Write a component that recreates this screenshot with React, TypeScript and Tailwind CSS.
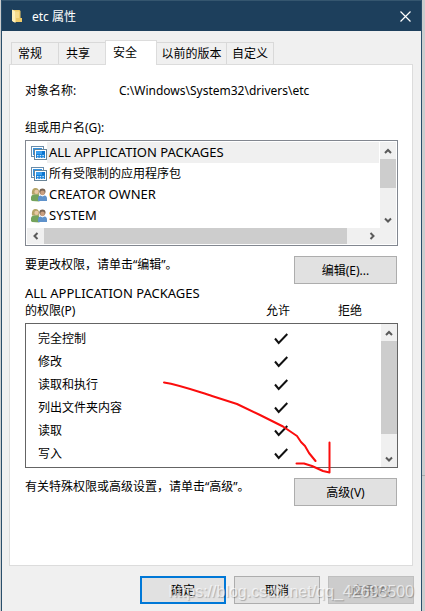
import { useState } from 'react';
import type { ReactNode } from 'react';

const principals = [
    { name: 'ALL APPLICATION PACKAGES', kind: 'app' },
    { name: '所有受限制的应用程序包', kind: 'app' },
    { name: 'CREATOR OWNER', kind: 'users' },
    { name: 'SYSTEM', kind: 'users' },
];

const permissions = ['完全控制', '修改', '读取和执行', '列出文件夹内容', '读取', '写入'];

function FolderIcon() {
    return (
        <svg width="12" height="14" viewBox="0 0 12 14" aria-hidden="true">
            <path d="M1 1h6.500l1 1v7H10v4H1z" fill="#efcb6a" />
            <path d="M0 0.500 3.500 2.500V14L0 12z" fill="#ffefb8" />
            <path d="M3.500 2.500H7V9H3.500z" fill="#f7dc8e" />
        </svg>
    );
}

function AppIcon() {
    return (
        <svg width="16" height="16" viewBox="0 0 16 16" aria-hidden="true">
            <rect x="0.5" y="1.5" width="12" height="10" fill="#fff" stroke="#6a8ca9" />
            <rect x="2" y="3" width="9" height="7" fill="#3393e2" />
            <rect x="3.5" y="4.5" width="12" height="10" fill="#fff" stroke="#6a8496" />
            <rect x="5" y="6" width="9" height="3" fill="#3ba0f0" />
            <rect x="11" y="6" width="3" height="3" fill="#0f74cc" />
            <rect x="5" y="9" width="9" height="4" fill="#1681d9" />
            <path d="M6 10.5h1.500M8.700 10.5h1.500M11.400 10.5h1.500M6 12.300h1.500M8.700 12.300h1.500M11.400 12.300h1.500" stroke="#fff" strokeWidth="0.8" />
        </svg>
    );
}

function UsersIcon() {
    return (
        <svg width="16" height="16" viewBox="0 0 16 16" aria-hidden="true">
            <path d="M1 7.500C.5 3 2 1 4.500 1S8.300 2.500 8 5.500l.3 2.500z" fill="#b5a468" />
            <circle cx="5.500" cy="4.900" r="2.100" fill="#e8c8a4" />
            <path d="M0 13v-3Q.3 7.600 3 7.400h3.500Q8.500 7.600 8.500 10v4.500L1 14z" fill="#74a35c" />
            <circle cx="11.400" cy="4.600" r="3.100" fill="#75604f" />
            <circle cx="11.500" cy="5.900" r="2.300" fill="#c99f80" />
            <path d="M7 14v-3Q7 8.700 9.500 8.400l2 1.200 2-1.200Q16 8.700 16 11.500V14z" fill="#5f92cb" />
        </svg>
    );
}

function CheckIcon() {
    return (
        <svg className="mx-auto block" width="14" height="12" viewBox="0 0 14 12" role="img" aria-label="允许">
            <path d="M1 5.500 4.700 10 13.300 1" fill="none" stroke="#111" strokeWidth="2" />
        </svg>
    );
}

const arrows = {
    up: 'M1 6 4 3 7 6',
    down: 'M1 2.500 4 5.500 7 2.500',
    left: 'M5.500 1 2.500 4 5.500 7',
    right: 'M2.500 1 5.500 4 2.500 7',
};

function ScrollButton({ dir, label }: { dir: keyof typeof arrows; label: string }) {
    return (
        <button type="button" aria-label={label} className="flex h-[17px] w-[17px] shrink-0 items-center justify-center">
            <svg width="8" height="8" viewBox="0 0 8 8" className="shrink-0">
                <path d={arrows[dir]} fill="none" stroke="#5a5a5a" strokeWidth="2" />
            </svg>
        </button>
    );
}

function Tab({ children, active }: { children: ReactNode; active?: boolean }) {
    return (
        <button
            type="button"
            role="tab"
            aria-selected={!!active}
            className={
                active
                    ? 'relative -mb-px -ml-px h-[25px] border border-b-0 border-[#dcdcdc] bg-white pr-[19px] pb-[2px] pl-[7px]'
                    : 'h-[22px] border border-b-0 border-l-0 border-[#d9d9d9] bg-[#f0f0f0] first:border-l'
            }
        >
            {children}
        </button>
    );
}

const button = 'h-7 border border-[#adadad] bg-[#e1e1e1]';

function App() {
    const [selected, setSelected] = useState(0);

    return (
        <div className="relative min-h-screen bg-[#cbcdce] pr-[3px] pl-px font-['Noto_Sans','Noto_Sans_CJK_SC',sans-serif] text-xs leading-[17px] text-black">
            {/* Edge of the window behind */}
            <div className="absolute top-[475px] right-0 h-px w-[3px] bg-[#a9abac]" />

            <div className="flex min-h-screen flex-col border-x border-[#2a4f6c] bg-[#f0f0f0]">
                {/* Title bar */}
                <header className="flex h-[31px] items-center border-t border-[#35566f] bg-[#1d3f5c] px-[10px] text-white">
                    <FolderIcon />
                    <h1 className="ml-2 flex-1">etc 属性</h1>
                    <button type="button" aria-label="关闭">
                        <svg width="11" height="11" viewBox="0 0 11 11">
                            <path d="M0.500 0.500 10.500 10.500M10.500 0.500 0.500 10.500" stroke="#fff" strokeWidth="1.200" />
                        </svg>
                    </button>
                </header>

                <main className="px-2 pt-[9px] pl-[7px]">
                    <div role="tablist" className="ml-[2px] flex items-end">
                        <Tab><span className="block w-[46px] pr-[10px]">常规</span></Tab>
                        <Tab><span className="block w-[46px] pr-[8px]">共享</span></Tab>
                        <Tab active>安全</Tab>
                        <Tab><span className="block w-[69px]">以前的版本</span></Tab>
                        <Tab><span className="block w-[46px]">自定义</span></Tab>
                    </div>

                    <section role="tabpanel" className="h-[502px] border border-[#dcdcdc] bg-white pt-[17px] pr-[14px] pl-[15px]">
                        <div className="flex">
                            <span className="w-[94px]">对象名称:</span>
                            <span>C:\Windows\System32\drivers\etc</span>
                        </div>

                        <h2 id="groups" className="mt-5">组或用户名(G):</h2>
                        <div className="mt-1 border border-[#828790] p-px">
                            <div className="flex">
                                <ul role="listbox" aria-labelledby="groups" className="mr-px h-[86px] flex-1">
                                    {principals.map((p, i) => (
                                        <li
                                            key={p.name}
                                            role="option"
                                            aria-selected={i === selected}
                                            onClick={() => setSelected(i)}
                                            className="flex h-[21px] items-center pl-1"
                                        >
                                            {p.kind === 'app' ? <AppIcon /> : <UsersIcon />}
                                            <span
                                                className={`flex h-full flex-1 items-center pl-[2px] ${/^[A-Z]/.test(p.name) ? 'text-[13px]' : ''} ${i === selected ? 'bg-[#f0f0f0]' : ''}`}
                                            >
                                                {p.name}
                                            </span>
                                        </li>
                                    ))}
                                </ul>
                                <div className="flex w-4 flex-col items-center bg-[#f0f0f0]">
                                    <ScrollButton dir="up" label="向上滚动" />
                                    <div className="h-[29px] w-full bg-[#cdcdcd]" />
                                    <div className="flex-1" />
                                    <ScrollButton dir="down" label="向下滚动" />
                                </div>
                            </div>
                            <div className="flex h-4 items-center bg-[#f0f0f0] pr-4">
                                <ScrollButton dir="left" label="向左滚动" />
                                <div className="h-full flex-1 bg-[#cdcdcd]" />
                                <div className="w-4" />
                                <ScrollButton dir="right" label="向右滚动" />
                            </div>
                        </div>

                        <div className="mt-[10px] flex items-start justify-between pr-px">
                            <p>要更改权限，请单击“编辑”。</p>
                            <button type="button" className={`${button} w-[103px]`}>编辑(E)...</button>
                        </div>

                        {/* Permissions */}
                        <div className="mt-px flex items-end pr-3">
                            <h2 className="flex-1">
                                <span className="text-[13px]">ALL APPLICATION PACKAGES</span>
                                <br />
                                的权限(P)
                            </h2>
                            <span className="w-[72px] text-center">允许</span>
                            <span className="w-[72px] text-center">拒绝</span>
                        </div>
                        <div className="mt-1 flex h-[145px] items-start border border-[#646464] pt-[3px]">
                            <table className="flex-1">
                                <tbody>
                                    {permissions.map((name) => (
                                        <tr key={name} className="h-[23px]">
                                            <th scope="row" className="pl-3 text-left font-normal">{name}</th>
                                            <td className="w-[72px]"><CheckIcon /></td>
                                            <td className="w-16" />
                                        </tr>
                                    ))}
                                </tbody>
                            </table>
                            <div className="-mt-[3px] flex h-[143px] w-4 flex-col items-center bg-[#f0f0f0]">
                                <ScrollButton dir="up" label="向上滚动" />
                                <div className="h-[93px] w-full bg-[#cdcdcd]" />
                                <div className="flex-1" />
                                <ScrollButton dir="down" label="向下滚动" />
                            </div>
                        </div>

                        <div className="mt-[10px] flex items-start justify-between pr-px">
                            <p>有关特殊权限或高级设置，请单击“高级”。</p>
                            <button type="button" className={`${button} w-[103px]`}>高级(V)</button>
                        </div>
                    </section>
                </main>

                <footer className="flex justify-end gap-2 pt-[10px] pr-[7px] pb-[7px]">
                    <button type="button" className="h-7 w-[86px] border-2 border-[#0078d7] bg-[#e1e1e1]">确定</button>
                    <button type="button" className={`${button} w-[86px]`}>取消</button>
                    <button type="button" disabled className="h-7 w-[86px] border border-[#bfbfbf] bg-[#cccccc] text-[#838383]">
                        应用(A)
                    </button>
                </footer>
            </div>

            {/* Hand-drawn arrow pointing at the advanced button */}
            <svg
                className="pointer-events-none absolute top-[375px] left-[160px]"
                width="180"
                height="105"
                viewBox="160 375 180 105"
                fill="none"
                stroke="#fb0d0d"
                strokeWidth="2"
                strokeLinecap="round"
                strokeLinejoin="round"
                aria-hidden="true"
            >
                <path d="M164 382.500C180 385 196 391 212 396L237 404 260 415 283 426.500 297 436 301 442 305 446 309 453 315.500 461" />
                <path d="M296.500 463.500H304L312 466 323 471 329.500 472.500V442.500" />
            </svg>

            <p className="pointer-events-none absolute right-[11px] bottom-[9px] font-['Liberation_Sans',sans-serif] text-base leading-5 text-white/65 [text-shadow:1px_1px_1px_rgb(0_0_0/0.25)]">
                https://blog.csdn.net/qq_42693500
            </p>
        </div>
    );
}

export default App;
